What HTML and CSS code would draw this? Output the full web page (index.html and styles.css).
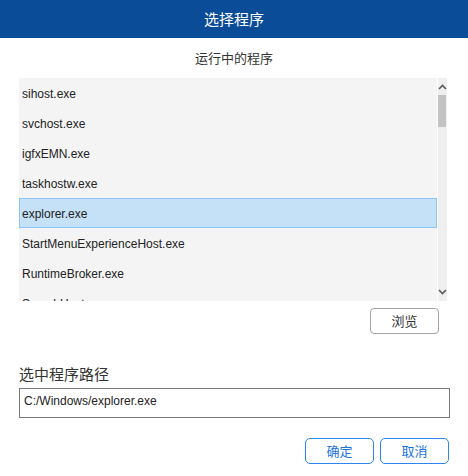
FILE: index.html
```html
<!DOCTYPE html>
<html lang="zh-CN">
<head>
<meta charset="utf-8">
<title>选择程序</title>
<link rel="stylesheet" href="styles.css">
</head>
<body>
<div class="dialog">
  <div class="titlebar">选择程序</div>
  <div class="subtitle">运行中的程序</div>
  <div class="listbox">
    <ul class="list">
      <li class="row">sihost.exe</li>
      <li class="row">svchost.exe</li>
      <li class="row">igfxEMN.exe</li>
      <li class="row">taskhostw.exe</li>
      <li class="row selected">explorer.exe</li>
      <li class="row">StartMenuExperienceHost.exe</li>
      <li class="row">RuntimeBroker.exe</li>
      <li class="row">SearchHost.exe</li>
    </ul>
    <div class="scrollbar">
      <svg class="arrow" width="9" height="8" viewBox="0 0 9 8"><path d="M1 6 L4.5 2.5 L8 6" fill="none" stroke="#5a5a5a" stroke-width="1.6"/></svg>
      <div class="thumb"></div>
      <div class="spacer"></div>
      <svg class="arrow" width="9" height="8" viewBox="0 0 9 8"><path d="M1 2 L4.5 5.5 L8 2" fill="none" stroke="#5a5a5a" stroke-width="1.6"/></svg>
    </div>
  </div>
  <div class="browse-row">
    <button class="btn btn-gray">浏览</button>
  </div>
  <div class="label">选中程序路径</div>
  <div class="path-input">C:/Windows/explorer.exe</div>
  <div class="actions">
    <button class="btn btn-blue">确定</button>
    <button class="btn btn-blue">取消</button>
  </div>
</div>
</body>
</html>
```

FILE: styles.css
```css
* { box-sizing: border-box; }
html, body {
  margin: 0;
  padding: 0;
  background: #ffffff;
}
body {
  width: 468px;
  height: 476px;
  overflow: hidden;
  font-family: "Liberation Sans", Arial, "Noto Sans CJK SC", sans-serif;
  color: #222;
}
.dialog {
  display: flex;
  flex-direction: column;
}
.titlebar {
  height: 38px;
  line-height: 38px;
  background: #0a4c97;
  color: #ffffff;
  text-align: center;
  font-family: "Noto Sans CJK SC", sans-serif;
  font-size: 15px;
}
.subtitle {
  height: 40px;
  line-height: 40px;
  text-align: center;
  font-family: "Noto Sans CJK SC", sans-serif;
  font-size: 13px;
  color: #333;
}
.listbox {
  display: flex;
  margin-left: 19px;
  width: 428px;
  height: 223px;
  gap: 1px;
}
.list {
  list-style: none;
  margin: 0;
  padding: 0;
  width: 418px;
  height: 223px;
  background: #f4f4f4;
  overflow: hidden;
}
.row {
  height: 30px;
  padding-top: 2px;
  line-height: 28px;
  padding-left: 3px;
  font-size: 12px;
  color: #222;
  white-space: nowrap;
}
.row.selected {
  background: #c5e1f7;
  border: 1px solid #8cc4f4;
  padding-top: 2px;
  line-height: 26px;
  padding-left: 2px;
}
.scrollbar {
  width: 9px;
  background: #efefef;
  display: flex;
  flex-direction: column;
  align-items: center;
}
.arrow {
  display: block;
  flex: none;
  margin-top: 5px;
}
.scrollbar .arrow:last-child {
  margin-top: 0;
  margin-bottom: 5px;
}
.thumb {
  width: 8px;
  height: 32px;
  margin-top: 4px;
  align-self: flex-start;
  background: #c3c3c3;
}
.spacer { flex: 1; }
.browse-row {
  display: flex;
  justify-content: flex-end;
  padding-right: 29px;
  margin-top: 7px;
}
.btn {
  width: 69px;
  height: 26px;
  padding: 0;
  background: #ffffff;
  font-family: "Noto Sans CJK SC", sans-serif;
  font-size: 13px;
  line-height: 24px;
}
.btn-gray {
  border: 1px solid #a3a3a3;
  border-radius: 4px;
  color: #333;
}
.btn-blue {
  border: 1px solid #2a85ef;
  border-radius: 5px;
  color: #1a72e0;
}
.label {
  margin-top: 30px;
  margin-left: 19px;
  height: 20px;
  line-height: 20px;
  font-family: "Noto Sans CJK SC", sans-serif;
  font-size: 15px;
  color: #333;
}
.path-input {
  margin-top: 4px;
  margin-left: 19px;
  width: 431px;
  height: 30px;
  border: 1px solid #7a7a7a;
  padding-left: 4px;
  line-height: 24px;
  font-size: 12px;
  color: #222;
}
.actions {
  display: flex;
  justify-content: flex-end;
  gap: 6px;
  padding-right: 19px;
  margin-top: 20px;
}
```
